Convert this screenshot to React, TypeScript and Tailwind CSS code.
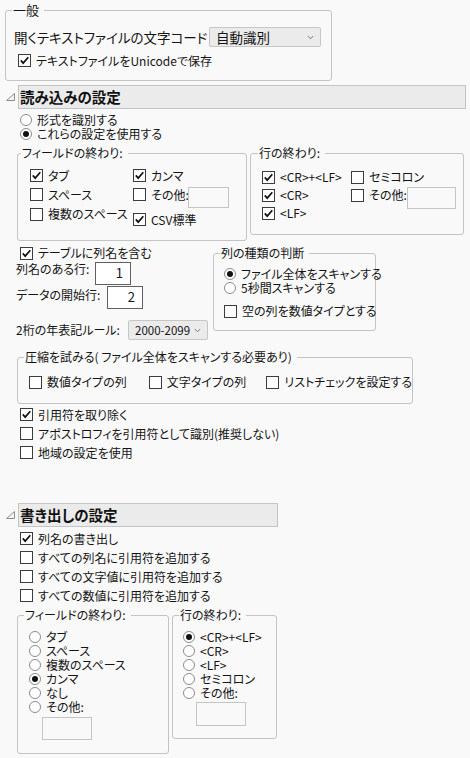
import type { ReactNode } from "react";

// Small form primitives that mimic the desktop dialog controls

function Check({ on }: { on?: boolean }) {
  return (
    <span className="flex h-[13px] w-[13px] shrink-0 items-center justify-center border border-[#3c3c3c] bg-white">
      {on && (
        <svg width="11" height="11" viewBox="0 0 11 11">
          <path d="M1.8 5.4 L4.2 8.1 L9.3 2.3" fill="none" stroke="#111" strokeWidth="1.7" />
        </svg>
      )}
    </span>
  );
}

function Radio({ on }: { on?: boolean }) {
  return (
    <span className="flex h-[12px] w-[12px] shrink-0 items-center justify-center rounded-full border border-[#8c8c8c] bg-white">
      {on && <span className="h-[6px] w-[6px] rounded-full bg-[#111]" />}
    </span>
  );
}

function CheckRow({ on, label, className = "" }: { on?: boolean; label: string; className?: string }) {
  return (
    <div className={`flex items-center gap-[5px] ${className}`}>
      <Check on={on} />
      <span className="whitespace-nowrap">{label}</span>
    </div>
  );
}

function RadioRow({ on, label, className = "" }: { on?: boolean; label: string; className?: string }) {
  return (
    <div className={`flex h-[14px] items-center gap-[5px] ${className}`}>
      <Radio on={on} />
      <span className="whitespace-nowrap">{label}</span>
    </div>
  );
}

function Group({
  legend,
  className = "",
  legendClass = "",
  children,
}: {
  legend: string;
  className?: string;
  legendClass?: string;
  children: ReactNode;
}) {
  return (
    <fieldset className={`min-w-0 shrink-0 rounded-[3px] border border-[#c4c4c4] ${className}`}>
      <legend className={`pl-[1px] pr-[5px] leading-[14px] whitespace-nowrap ${legendClass}`}>{legend}</legend>
      {children}
    </fieldset>
  );
}

function Select({ value, className = "" }: { value: string; className?: string }) {
  return (
    <div
      className={`flex h-[20px] items-center justify-between rounded-[2px] border border-[#c6c6c6] bg-[#ebebeb] pl-[6px] pr-[6px] ${className}`}
    >
      <span className="whitespace-nowrap">{value}</span>
      <svg width="7" height="5" viewBox="0 0 7 5">
        <path d="M0.8 1 L3.5 3.8 L6.2 1" fill="none" stroke="#7a7a7a" strokeWidth="1" />
      </svg>
    </div>
  );
}

function NumBox({ value }: { value: string }) {
  return (
    <div className="flex h-[23px] w-[36px] justify-end border border-[#606060] bg-white pr-[7px] pt-[3px] text-[13px]">
      {value}
    </div>
  );
}

function Field({ className = "" }: { className?: string }) {
  return <div className={`shrink-0 border border-[#c4c4c4] ${className}`} />;
}

function Header({ title, barClass }: { title: string; barClass: string }) {
  return (
    <div className="flex h-[24px]">
      <svg className="ml-[6px] mr-[3px] mt-[8px]" width="9" height="8" viewBox="0 0 9 8">
        <path d="M8.5 0.5 L8.5 7.5 L0.5 7.5 Z" fill="#f4f4f4" stroke="#8e8e8e" strokeWidth="1" />
      </svg>
      <div
        className={`flex h-[24px] items-center border border-[#c4c4c4] bg-[#ebebeb] pl-[1px] text-[14.5px] leading-[18px] font-bold text-[#111] ${barClass}`}
      >
        {title}
      </div>
    </div>
  );
}

export default function App() {
  return (
    <div className="h-[758px] w-[470px] overflow-hidden bg-[#f9f9f9] pt-[3px] font-['Noto_Sans_CJK_JP','Noto_Sans',sans-serif] text-[12px] leading-[14px] text-[#141414] [font-feature-settings:'palt']">
      {/* 一般 */}
      <Group legend="一般" className="ml-[5px] h-[78px] w-[327px]" legendClass="ml-[6px] text-[13px]">
        <div className="mt-[10px] flex items-center pl-[8px]">
          <span className="w-[195px] whitespace-nowrap text-[13.5px]">開くテキストファイルの文字コード</span>
          <Select value="自動識別" className="w-[112px] text-[13.5px]" />
        </div>
        <CheckRow on label="テキストファイルをUnicodeで保存" className="mt-[4px] h-[19px] pl-[12px]" />
      </Group>

      {/* 読み込みの設定 */}
      <div className="mt-[4px]">
        <Header title="読み込みの設定" barClass="w-[448px]" />
      </div>
      <div className="mt-[4px] pl-[20px]">
        <RadioRow label="形式を識別する" />
        <RadioRow on label="これらの設定を使用する" />
      </div>

      <div className="mt-[5px] flex items-start">
        <Group legend="フィールドの終わり:" className="ml-[17px] h-[95px] w-[230px]" legendClass="ml-[3px]">
          <div className="mt-[6px] flex pl-[12px]">
            <div className="w-[103px]">
              <CheckRow on label="タブ" className="h-[19px]" />
              <CheckRow label="スペース" className="h-[19px]" />
              <CheckRow label="複数のスペース" className="h-[20px]" />
            </div>
            <div>
              <CheckRow on label="カンマ" className="h-[19px]" />
              <div className="flex h-[19px] items-center gap-[5px]">
                <Check />
                <span className="w-[37px] whitespace-nowrap">その他:</span>
                <Field className="-ml-[5px] mt-[2px] h-[21px] w-[41px] self-start" />
              </div>
              <CheckRow on label="CSV標準" className="mt-[6px] h-[19px]" />
            </div>
          </div>
        </Group>
        <Group legend="行の終わり:" className="ml-[3px] h-[89px] w-[214px]" legendClass="ml-[7px]">
          <div className="mt-[8px] flex pl-[11px]">
            <div className="w-[89px]">
              <CheckRow on label="<CR>+<LF>" className="h-[18px]" />
              <CheckRow on label="<CR>" className="h-[18px]" />
              <CheckRow on label="<LF>" className="h-[18px]" />
            </div>
            <div>
              <CheckRow label="セミコロン" className="h-[18px]" />
              <div className="flex h-[18px] items-center gap-[5px]">
                <Check />
                <span className="w-[38px] whitespace-nowrap">その他:</span>
                <Field className="-ml-[5px] mt-[1px] h-[22px] w-[49px] self-start" />
              </div>
            </div>
          </div>
        </Group>
      </div>

      <div className="mt-[5px] flex items-start">
        <div className="w-[213px] shrink-0">
          <CheckRow on label="テーブルに列名を含む" className="h-[14px] pl-[20px]" />
          <div className="mt-[2px] flex items-start pl-[16px]">
            <span className="w-[79px] whitespace-nowrap">列名のある行:</span>
            <NumBox value="1" />
          </div>
          <div className="mt-[1px] flex items-start pl-[16px]">
            <span className="mt-[2px] w-[91px] whitespace-nowrap">データの開始行:</span>
            <NumBox value="2" />
          </div>
          <div className="mt-[11px] flex items-center pl-[16px]">
            <span className="w-[112px] whitespace-nowrap">2桁の年表記ルール:</span>
            <Select value="2000-2099" className="w-[80px] text-[11.5px]" />
          </div>
        </div>
        <Group legend="列の種類の判断" className="h-[85px] w-[163px]" legendClass="ml-[6px]">
          <div className="mt-[7px] pl-[10px]">
            <RadioRow on label="ファイル全体をスキャンする" />
            <RadioRow label="5秒間スキャンする" />
            <CheckRow label="空の列を数値タイプとする" className="mt-[7px] h-[18px]" />
          </div>
        </Group>
      </div>

      <Group
        legend="圧縮を試みる( ファイル全体をスキャンする必要あり)"
        className="ml-[17px] mt-[10px] h-[54px] w-[396px]"
        legendClass="ml-[6px]"
      >
        <div className="mt-[9px] flex h-[18px] pl-[11px]">
          <CheckRow label="数値タイプの列" className="w-[123px]" />
          <CheckRow label="文字タイプの列" className="w-[121px]" />
          <CheckRow label="リストチェックを設定する" />
        </div>
      </Group>

      <div className="mt-[1px] pl-[20px]">
        <CheckRow on label="引用符を取り除く" className="h-[19px]" />
        <CheckRow label="アポストロフィを引用符として識別(推奨しない)" className="h-[19px]" />
        <CheckRow label="地域の設定を使用" className="h-[19px]" />
      </div>

      {/* 書き出しの設定 */}
      <div className="mt-[41px]">
        <Header title="書き出しの設定" barClass="w-[260px]" />
      </div>
      <div className="mt-[2px] pl-[20px]">
        <CheckRow on label="列名の書き出し" className="h-[19px]" />
        <CheckRow label="すべての列名に引用符を追加する" className="h-[19px]" />
        <CheckRow label="すべての文字値に引用符を追加する" className="h-[19px]" />
        <CheckRow label="すべての数値に引用符を追加する" className="h-[19px]" />
      </div>

      <div className="mt-[3px] flex items-start">
        <Group legend="フィールドの終わり:" className="ml-[17px] h-[146px] w-[152px]" legendClass="ml-[6px]">
          <div className="mt-[8px] pl-[11px]">
            <RadioRow label="タブ" />
            <RadioRow label="スペース" />
            <RadioRow label="複数のスペース" />
            <RadioRow on label="カンマ" />
            <RadioRow label="なし" />
            <RadioRow label="その他:" />
            <Field className="ml-[13px] mt-[3px] h-[23px] w-[50px]" />
          </div>
        </Group>
        <Group legend="行の終わり:" className="ml-[3px] h-[131px] w-[105px]" legendClass="ml-[6px]">
          <div className="mt-[8px] pl-[10px]">
            <RadioRow on label="<CR>+<LF>" />
            <RadioRow label="<CR>" />
            <RadioRow label="<LF>" />
            <RadioRow label="セミコロン" />
            <RadioRow label="その他:" />
            <Field className="ml-[13px] mt-[2px] h-[24px] w-[50px]" />
          </div>
        </Group>
      </div>
    </div>
  );
}
